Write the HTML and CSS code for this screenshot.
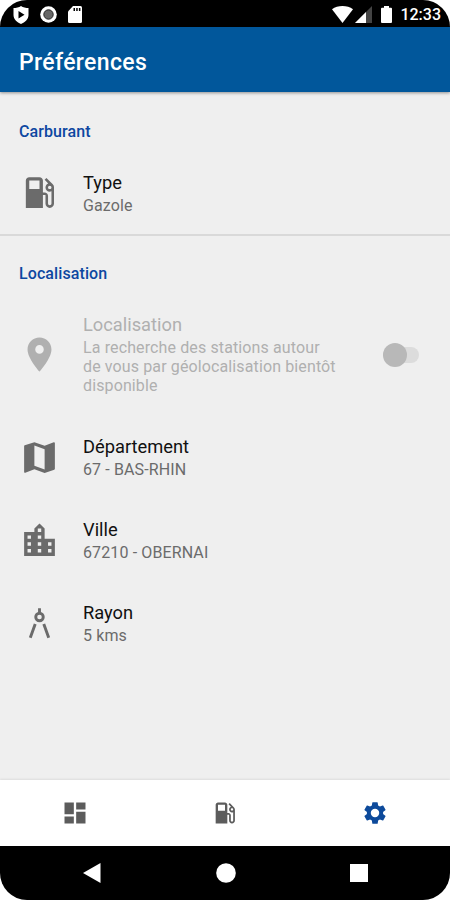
FILE: index.html
```html
<!DOCTYPE html>
<html lang="fr">
<head>
    <meta charset="UTF-8">
    <meta name="viewport" content="width=device-width, initial-scale=1.0">
    <title>Préférences</title>
    <link rel="stylesheet" href="styles.css">
</head>
<body>
    <!-- Shared fuel pump icon -->
    <svg class="symbols">
        <symbol id="gas" viewBox="0 0 24 24">
            <path d="M19.77 7.23l.01-.01-3.72-3.72L15 4.56l2.11 2.11c-.94.36-1.61 1.26-1.61 2.33 0 1.38 1.12 2.5 2.5 2.5.36 0 .69-.08 1-.21v7.21c0 .55-.45 1-1 1s-1-.45-1-1V14c0-1.1-.9-2-2-2h-1V5c0-1.1-.9-2-2-2H6c-1.1 0-2 .9-2 2v16h10v-7.5h1.5v5c0 1.38 1.12 2.5 2.5 2.5s2.5-1.12 2.5-2.5V9c0-.69-.28-1.32-.73-1.77zM12 10H6V5h6v5zm6 0c-.55 0-1-.45-1-1s.45-1 1-1 1 .45 1 1-.45 1-1 1z"/>
        </symbol>
    </svg>

    <div class="phone">
        <div class="status-bar">
            <div class="status-left">
                <svg width="16" height="18" viewBox="0 0 16 18"><path fill="#fff" d="M8 0C6 1.500 3 2 .5 2v7c0 4 3.500 7.500 7.500 9 4-1.500 7.500-5 7.500-9V2C13 2 10 1.500 8 0z"/><path d="M5.500 5v7.500l6-3.750z"/></svg>
                <svg width="17" height="17" viewBox="0 0 17 17"><circle cx="8.500" cy="8.500" r="8.300" fill="#fff"/><circle cx="8.500" cy="8.500" r="4.700" fill="#666" stroke="#222" stroke-width="1"/></svg>
                <svg width="14" height="17" viewBox="0 0 14 17"><path fill="#fff" d="M5 0h7.500Q14 0 14 1.500v14q0 1.500-1.500 1.500h-11Q0 17 0 15.500V5.500z"/><path d="M5.500 2H7v3H5.500zM8.200 2h1.500v3H8.200zM10.900 2h1.500v3h-1.500z"/></svg>
            </div>
            <div class="status-right">
                <svg width="21" height="17" viewBox="0 0 22 17" preserveAspectRatio="none"><path fill="#fff" d="M0 3.200C6-1 16-1 22 3.200L11 17z"/></svg>
                <svg class="signal" width="17" height="17" viewBox="0 0 17 17"><path fill="#444" d="M17 0v17H0z"/><path fill="#fff" d="M11 6V17H0z"/></svg>
                <svg class="battery" width="11" height="17" viewBox="0 0 11 17"><path fill="#fff" d="M3 0h5v1.700h2q1 0 1 1V16q0 1-1 1H1q-1 0-1-1V2.700q0-1 1-1h2z"/></svg>
                <span class="clock">12:33</span>
            </div>
        </div>

        <div class="header">
            <h1>Préférences</h1>
        </div>

        <div class="content">
            <h2 class="category first">Carburant</h2>
            <div class="row short">
                <svg class="icon"><use href="#gas"/></svg>
                <div class="text">
                    <h3>Type</h3>
                    <p>Gazole</p>
                </div>
            </div>

            <div class="divider"></div>

            <h2 class="category">Localisation</h2>
            <div class="row tall disabled">
                <svg class="icon" viewBox="0 0 24 24"><path d="M12 2C8.130 2 5 5.130 5 9c0 5.250 7 13 7 13s7-7.750 7-13c0-3.870-3.130-7-7-7zm0 9.500a2.500 2.500 0 1 1 0-5 2.500 2.500 0 0 1 0 5z"/></svg>
                <div class="text">
                    <h3>Localisation</h3>
                    <p>La recherche des stations autour<br>de vous par géolocalisation bientôt<br>disponible</p>
                </div>
                <div class="switch"><div class="thumb"></div></div>
            </div>
            <div class="row">
                <svg class="icon" viewBox="0 0 24 24"><path d="M20.500 3l-.160.030L15 5.100 9 3 3.360 4.900c-.210.070-.360.250-.360.480V20.500c0 .280.220.500.500.500l.160-.030L9 18.900l6 2.100 5.640-1.900c.210-.070.360-.250.360-.480V3.500c0-.280-.220-.500-.500-.500zM15 19l-6-2.110V5l6 2.110V19z"/></svg>
                <div class="text">
                    <h3>Département</h3>
                    <p>67 - BAS-RHIN</p>
                </div>
            </div>
            <div class="row">
                <svg class="icon" viewBox="0 0 24 24"><path d="M15 11V5l-3-3-3 3v2H3v14h18V11h-6zm-8 8H5v-2h2v2zm0-4H5v-2h2v2zm0-4H5V9h2v2zm6 8h-2v-2h2v2zm0-4h-2v-2h2v2zm0-4h-2V9h2v2zm0-4h-2V5h2v2zm6 12h-2v-2h2v2zm0-4h-2v-2h2v2z"/></svg>
                <div class="text">
                    <h3>Ville</h3>
                    <p>67210 - OBERNAI</p>
                </div>
            </div>
            <div class="row">
                <svg class="icon compass" viewBox="0 0 24 24"><path d="M12 3v3M9.500 12.300L6.600 20.300M14.500 12.300l2.900 8"/><circle cx="12" cy="8.200" r="2.200"/></svg>
                <div class="text">
                    <h3>Rayon</h3>
                    <p>5 kms</p>
                </div>
            </div>
        </div>

        <div class="tabs">
            <a href="#"><svg viewBox="0 0 24 24"><path d="M3 13h8V3H3v10zm0 8h8v-6H3v6zm10 0h8V11h-8v10zm0-18v6h8V3h-8z"/></svg></a>
            <a href="#"><svg><use href="#gas"/></svg></a>
            <a href="#" class="active"><svg viewBox="0 0 24 24"><path d="M19.430 12.980c.040-.320.070-.640.070-.980s-.030-.660-.070-.980l2.110-1.650c.190-.150.240-.420.120-.640l-2-3.460c-.120-.220-.390-.300-.610-.220l-2.490 1c-.520-.400-1.080-.730-1.690-.980l-.380-2.650C14.460 2.180 14.250 2 14 2h-4c-.250 0-.460.180-.490.420l-.380 2.650c-.610.250-1.170.590-1.690.980l-2.490-1c-.230-.090-.490 0-.610.220l-2 3.460c-.130.220-.070.490.120.640l2.110 1.650c-.040.320-.070.650-.070.980s.030.660.070.980l-2.110 1.650c-.190.150-.240.420-.120.640l2 3.460c.120.220.390.300.610.220l2.490-1c.520.400 1.080.730 1.690.980l.380 2.650c.030.240.240.420.490.420h4c.250 0 .460-.180.490-.420l.380-2.650c.610-.250 1.170-.590 1.690-.980l2.490 1c.230.090.490 0 .610-.220l2-3.460c.120-.220.070-.490-.120-.640l-2.110-1.650zM12 15.900a3.900 3.900 0 1 1 0-7.800 3.900 3.900 0 0 1 0 7.800z"/></svg></a>
        </div>

        <div class="nav-bar">
            <svg width="18" height="20" viewBox="0 0 18 20"><path d="M17.500 0v20L0 10z"/></svg>
            <svg width="20" height="20" viewBox="0 0 20 20"><circle cx="10" cy="10" r="9.800"/></svg>
            <svg width="18" height="18" viewBox="0 0 18 18"><path d="M0 0h18v18H0z"/></svg>
        </div>
    </div>
</body>
</html>
```

FILE: styles.css
```css
* {
    box-sizing: border-box;
}
body {
    margin: 0;
    background-color: #fff;
    font-family: Roboto, sans-serif;
}
h1, h2, h3, p {
    margin: 0;
}
.symbols {
    display: none;
}
.phone {
    display: flex;
    flex-direction: column;
    width: 450px;
    height: 900px;
    overflow: hidden;
    border-radius: 27px;
    background-color: #efefef;
}
.status-bar {
    display: flex;
    justify-content: space-between;
    height: 27px;
    padding: 6px 9px 0 13px;
    background-color: #000;
    color: #fff;
}
.status-left {
    display: flex;
    gap: 11px;
}
.status-right {
    display: flex;
}
.signal {
    margin-left: 2px;
}
.battery {
    margin: 0 8px 0 9px;
}
.clock {
    font-size: 16px;
    font-weight: 500;
    line-height: 18px;
}
.header {
    display: flex;
    align-items: center;
    height: 65px;
    padding: 5px 19px 0;
    background-color: #01579b;
    color: #fff;
    box-shadow: 0 1px 3px rgba(0, 0, 0, 0.4);
}
.header h1 {
    font-size: 23px;
    font-weight: 500;
    letter-spacing: 0.35px;
}
.content {
    flex: 1;
}
.category {
    height: 57px;
    padding: 28px 19px 0;
    color: #0d47a1;
    font-size: 16px;
    font-weight: 500;
    letter-spacing: 0.1px;
    line-height: 19px;
}
.category.first {
    height: 60px;
    padding-top: 30px;
}
.row {
    display: flex;
    align-items: center;
    height: 83px;
    padding: 0 31px 0 19px;
    color: #6b6b6b;
}
.row.short {
    height: 82px;
}
.row.tall {
    height: 123px;
}
.icon {
    width: 41px;
    height: 41px;
    margin: 0 23px 1px 0;
    fill: currentColor;
}
.compass {
    fill: none;
    stroke: currentColor;
    stroke-width: 1.7;
}
.text {
    flex: 1;
}
.row h3 {
    color: #111;
    font-size: 18.3px;
    font-weight: 400;
    line-height: 22px;
}
.row p {
    margin-top: 2px;
    font-size: 16px;
    letter-spacing: 0.12px;
    line-height: 19px;
}
.row.disabled,
.row.disabled h3 {
    color: #b0b0b0;
}
.divider {
    height: 2px;
    background-color: #d9d9d9;
}
.switch {
    display: flex;
    align-items: center;
    width: 36px;
    height: 16px;
    border-radius: 8px;
    background-color: #dcdcdc;
}
.thumb {
    width: 24px;
    height: 24px;
    border-radius: 50%;
    background-color: #b8b8b8;
}
.tabs {
    display: flex;
    height: 66px;
    background-color: #fff;
    box-shadow: 0 -1px 2px rgba(0, 0, 0, 0.08);
}
.tabs a {
    display: flex;
    flex: 1;
    align-items: center;
    justify-content: center;
    color: #5c5c5c;
}
.tabs svg {
    width: 28px;
    height: 28px;
    fill: currentColor;
}
.tabs a.active {
    color: #0d4a9b;
}
.tabs a.active svg {
    width: 26px;
    height: 26px;
}
.nav-bar {
    display: flex;
    align-items: center;
    justify-content: space-between;
    height: 54px;
    padding: 0 82px 0 83px;
    background-color: #000;
    fill: #fff;
}
```
